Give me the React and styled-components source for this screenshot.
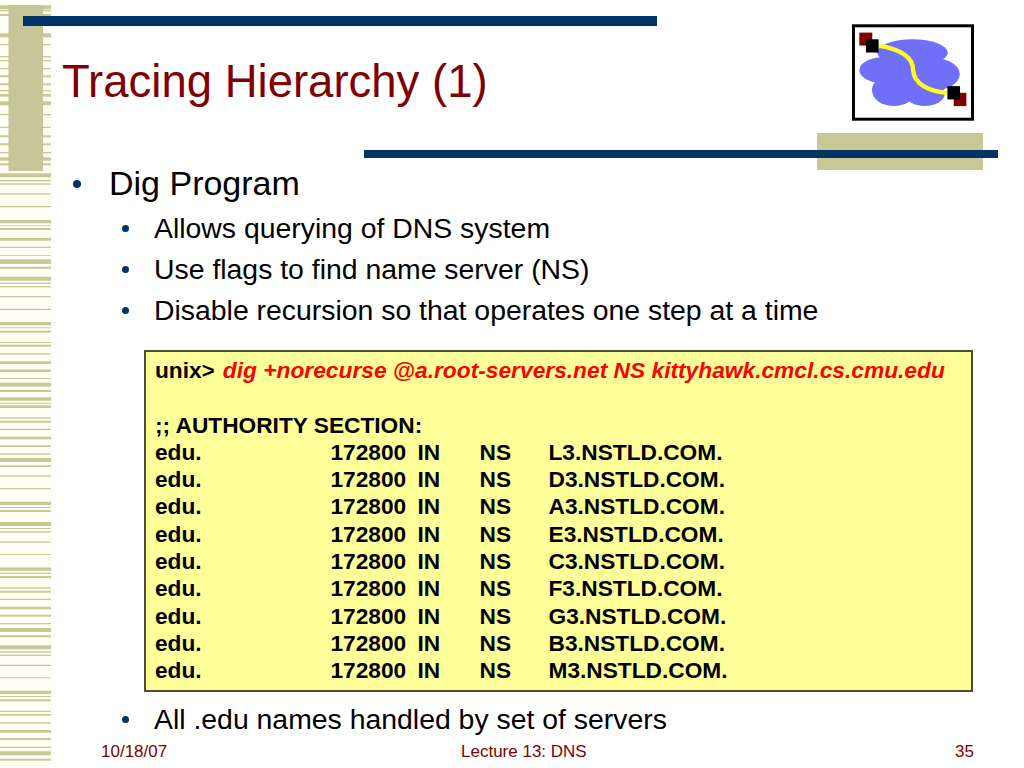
import React from "react";
import styled, { createGlobalStyle } from "styled-components";

const GlobalStyle = createGlobalStyle`
    html, body {
        margin: 0;
        padding: 0;
        background: #fff;
    }
`;

// [top, height] of each band in the left rail
const stripes = [
    [5.3, 4], [10, 1.3], [14, 2], [33.3, 4], [44, 1.3], [56, 1.3], [60, 1.3], [68, 1.3], [75.3, 2], [83.3, 2],
    [90, 1.3], [94, 2.7], [101.3, 4], [114, 1.3], [126.7, 1.3], [135.3, 2], [143.3, 2], [152, 1.3], [157.3, 3.4],
    [163.3, 2], [173.3, 4], [180, 1.3], [183.3, 1.4], [193.3, 1.4], [206, 1.3], [220, 3.3], [225.2, 0.8], [228, 2],
    [238, 2.7], [246.7, 1.3], [255, 0.8], [259.3, 4.7], [266.7, 2], [276.7, 4], [282.7, 1.3], [286, 1.3], [296, 1.3],
    [308.7, 1.3], [322, 3.3], [327.3, 1], [330.7, 2], [342, 1], [344.7, 2], [353.3, 1.4], [361.3, 2.7], [369.5, 2.5],
    [378, 1], [382.7, 4], [390, 2], [397.3, 3.4], [402.7, 1], [405.3, 2.7], [417.3, 1.4], [420.7, 2], [428.7, 1.3],
    [436.7, 2.6], [445.3, 1.7], [453.3, 1.4], [458, 4], [465.3, 1.7], [475.3, 1.4], [488, 1.3], [501.7, 3.3],
    [507, 1], [510, 2], [522, 4], [528, 1], [531.3, 1.4], [541.3, 1.4], [554, 1], [567.5, 3.2], [572.7, 1.3],
    [576, 2], [587.3, 1.4], [590.7, 2], [598.7, 1.3], [606.7, 2.6], [614.7, 2], [623, 1.3], [628, 4], [635.3, 2],
    [645.3, 4], [651.3, 1.4], [654.7, 1.3], [664.7, 1.3], [677.3, 1], [690.7, 3.3], [696, 1], [699.3, 2], [710.7, 1.3],
    [714, 1.7], [722.3, 1.4], [730, 2.7], [738, 2], [746.7, 1.3], [751.3, 4], [758.7, 2],
];

const records = [
    "L3.NSTLD.COM.",
    "D3.NSTLD.COM.",
    "A3.NSTLD.COM.",
    "E3.NSTLD.COM.",
    "C3.NSTLD.COM.",
    "F3.NSTLD.COM.",
    "G3.NSTLD.COM.",
    "B3.NSTLD.COM.",
    "M3.NSTLD.COM.",
];

const Slide = styled.div`
    display: flex;
    width: 1024px;
    height: 768px;
    overflow: hidden;
    background: #fff;
    font-family: "Liberation Sans", Arial, sans-serif;
    color: #000;
`;

const Rail = styled.svg`
    flex: none;
    display: block;
    width: 51px;
    height: 768px;
    background: #fffff6;
`;

const Main = styled.main`
    flex: 1;
    min-width: 0;
    display: flex;
    flex-direction: column;
`;

const Header = styled.header`
    display: flex;
    justify-content: space-between;
    height: 133px;
`;

const TitleBlock = styled.div`
    display: flex;
    flex-direction: column;
`;

const TopRule = styled.div`
    width: 634px;
    height: 10px;
    margin: 16px 0 0 -28px;
    background: #003366;
`;

const Title = styled.h1`
    margin: 29px 0 0 11px;
    font-size: 45.5px;
    line-height: 53px;
    font-weight: 400;
    color: #800000;
`;

const Logo = styled.svg`
    flex: none;
    display: block;
    width: 122px;
    height: 97px;
    margin: 24px 50px 0 0;
`;

const AccentBand = styled.div`
    display: grid;
    width: 634px;
    height: 36px;
    margin-left: 313px;
`;

const AccentBlock = styled.div`
    grid-area: 1 / 1;
    justify-self: end;
    width: 166px;
    height: 37px;
    margin-right: 15px;
    background: #c8c896;
`;

const AccentBar = styled.div`
    grid-area: 1 / 1;
    align-self: start;
    height: 8px;
    margin-top: 17px;
    background: #003366;
`;

const Bullets = styled.ul`
    list-style: none;
    margin: 0;
    padding: 0;
`;

const Bullet = styled.li`
    display: flex;
    align-items: center;
    height: ${(props) => (props.$top ? "29px" : "41px")};
    margin-bottom: ${(props) => (props.$top ? "10px" : "0")};
    margin-left: ${(props) => (props.$top ? "58px" : "103px")};
    font-size: ${(props) => (props.$top ? "34px" : "28.4px")};
    white-space: nowrap;

    &::before {
        content: "";
        flex: none;
        width: ${(props) => (props.$top ? "8px" : "7px")};
        height: ${(props) => (props.$top ? "8px" : "7px")};
        margin-left: ${(props) => (props.$top ? "-36px" : "-32px")};
        margin-right: ${(props) => (props.$top ? "28px" : "25px")};
        border-radius: 50%;
        background: #003366;
    }
`;

const Terminal = styled.section`
    box-sizing: border-box;
    width: 829px;
    height: 342px;
    margin: 19px 0 7px 93px;
    padding: 5px 0 0 9px;
    border: 2px solid #4c4c38;
    background: #ffff99;
    font-size: 22.7px;
    line-height: 27.3px;
    font-weight: 700;
`;

const Line = styled.div`
    height: 27.3px;
    white-space: nowrap;
`;

const Command = styled.span`
    margin-left: 2px;
    font-size: 22.75px;
    font-style: italic;
    color: #ff0000;
`;

const Prompt = styled.span`
    font-size: 22px;
`;

const Record = styled.div`
    display: grid;
    grid-template-columns: 175.5px 87px 62px 69px 1fr;
    height: 27.3px;
    white-space: nowrap;
`;

const Footer = styled.footer`
    display: grid;
    grid-template-columns: 360px 1fr 130px;
    height: 20px;
    margin: 2px 0 0 50px;
    font-size: 17px;
    line-height: 20px;
    color: #800000;
`;

const FooterDate = styled.span``;

const FooterTitle = styled.span`
    white-space: nowrap;
`;

const FooterPage = styled.span`
    padding-right: 50px;
    text-align: right;
`;

const App = () => {
    return (
        <>
            <GlobalStyle />
            <Slide>
                <Rail viewBox="0 0 51 768">
                    {stripes.map(([y, h], index) => (
                        <rect key={index} x="0" y={y} width="51" height={h} fill="#c8c996" />
                    ))}
                    <rect x="8.5" y="5.3" width="34.5" height="165.7" fill="#c6c698" />
                </Rail>
                <Main>
                    <Header>
                        <TitleBlock>
                            <TopRule />
                            <Title>Tracing Hierarchy (1)</Title>
                        </TitleBlock>
                        <Logo viewBox="96 42 367 290">
                            <rect x="96" y="42" width="367" height="290" fill="#fff" />
                            <rect x="100.5" y="46.5" width="358" height="281" fill="none" stroke="#000" strokeWidth="9" />
                            <g fill="#6f6ffa">
                                <ellipse cx="278" cy="127" rx="106" ry="40" />
                                <ellipse cx="195" cy="180" rx="77" ry="40" />
                                <ellipse cx="345" cy="192" rx="75" ry="48" />
                                <ellipse cx="222" cy="240" rx="66" ry="48" />
                                <ellipse cx="315" cy="250" rx="60" ry="38" />
                                <ellipse cx="270" cy="190" rx="95" ry="62" />
                            </g>
                            <path
                                d="M176 106 C250 118 280 145 280 180 C282 222 330 246 385 248"
                                fill="none"
                                stroke="#ffff1a"
                                strokeWidth="13"
                            />
                            <rect x="118" y="67" width="39" height="39" fill="#800000" />
                            <rect x="138" y="87" width="38" height="40" fill="#000" />
                            <rect x="402" y="248" width="38" height="40" fill="#800000" />
                            <rect x="383" y="228" width="38" height="40" fill="#000" />
                        </Logo>
                    </Header>
                    <AccentBand>
                        <AccentBlock />
                        <AccentBar />
                    </AccentBand>
                    <Bullets>
                        <Bullet $top>Dig Program</Bullet>
                        <Bullet>Allows querying of DNS system</Bullet>
                        <Bullet>Use flags to find name server (NS)</Bullet>
                        <Bullet>Disable recursion so that operates one step at a time</Bullet>
                    </Bullets>
                    <Terminal>
                        <Line>
                            unix<Prompt>&gt;</Prompt>{" "}
                            <Command>dig +norecurse @a.root-servers.net NS kittyhawk.cmcl.cs.cmu.edu</Command>
                        </Line>
                        <Line />
                        <Line>;; AUTHORITY SECTION:</Line>
                        {records.map((name) => (
                            <Record key={name}>
                                <span>edu.</span>
                                <span>172800</span>
                                <span>IN</span>
                                <span>NS</span>
                                <span>{name}</span>
                            </Record>
                        ))}
                    </Terminal>
                    <Bullets>
                        <Bullet>All .edu names handled by set of servers</Bullet>
                    </Bullets>
                    <Footer>
                        <FooterDate>10/18/07</FooterDate>
                        <FooterTitle>Lecture 13: DNS</FooterTitle>
                        <FooterPage>35</FooterPage>
                    </Footer>
                </Main>
            </Slide>
        </>
    );
};

export default App;
